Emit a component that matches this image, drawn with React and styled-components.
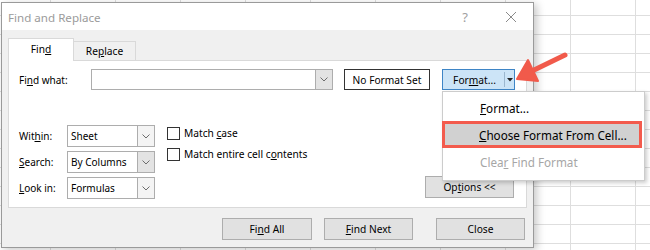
import styled, { createGlobalStyle } from 'styled-components';

const GlobalStyle = createGlobalStyle`
  html, body {
    margin: 0;
    padding: 0;
  }
  body {
    font-family: 'Noto Sans', 'Open Sans', sans-serif;
    color: #000;
  }
`;

const UI_FONT = "'Noto Sans', 'Open Sans', sans-serif";

const Sheet = styled.div`
  position: relative;
  width: 650px;
  height: 250px;
  overflow: hidden;
  background-color: #fff;
  background-image: linear-gradient(to right, #dedede 1px, transparent 1px),
    linear-gradient(to bottom, #dedede 1px, transparent 1px);
  background-size: 65px 100%, 100% 19px;
  background-position: 50px 0, 0 15px;
  padding-top: 2px;
  padding-left: 1px;
  box-sizing: border-box;
`;

const Dialog = styled.div`
  width: 533px;
  height: 246px;
  box-sizing: border-box;
  border: 1px solid #9a9a9a;
  background: #f0f0f0;
  box-shadow: 3px 2px 8px rgba(0, 0, 0, 0.22);
  display: flex;
  flex-direction: column;
  font-family: ${UI_FONT};
  font-size: 10px;
`;

const TitleBar = styled.div`
  height: 27px;
  background: #fff;
  display: flex;
  align-items: center;
  padding: 0 6px;
  flex-shrink: 0;
`;

const Title = styled.div`
  flex: 1;
  color: #9b9b9b;
  font-size: 11.6px;
  padding-top: 1px;
`;

const TitleIcon = styled.div`
  color: #a0a0a0;
  font-size: 13px;
  width: 12px;
  display: flex;
  justify-content: center;
  margin-right: ${(p) => p.$gap}px;
`;

const Body = styled.div`
  flex: 1;
  padding: 8px 6px 0;
  display: flex;
  flex-direction: column;
`;

const Tabs = styled.div`
  display: flex;
  align-items: flex-end;
  height: 22px;
`;

const Tab = styled.div`
  position: relative;
  z-index: ${(p) => (p.$active ? 2 : 1)};
  width: ${(p) => p.$width}px;
  height: ${(p) => (p.$active ? 23 : 20)}px;
  margin-bottom: -1px;
  box-sizing: border-box;
  border: 1px solid #d9d9d9;
  border-bottom: ${(p) => (p.$active ? 'none' : '1px solid #d9d9d9')};
  border-left: ${(p) => (p.$active ? '1px solid #d9d9d9' : 'none')};
  background: ${(p) => (p.$active ? '#fff' : '#f0f0f0')};
  display: flex;
  align-items: center;
  justify-content: center;
  padding-bottom: ${(p) => (p.$active ? 2 : 0)}px;
  font-size: 10.2px;
`;

const Panel = styled.div`
  position: relative;
  z-index: 1;
  height: 148px;
  box-sizing: border-box;
  border: 1px solid #d9d9d9;
  background: #fff;
  padding: 8px 11px 9px 10px;
  display: flex;
  flex-direction: column;
`;

const Row = styled.div`
  display: flex;
  align-items: center;
  height: 21px;
`;

const Label = styled.div`
  width: ${(p) => p.$width}px;
  flex-shrink: 0;
`;

const Combo = styled.div`
  width: ${(p) => p.$width}px;
  height: ${(p) => p.$height}px;
  box-sizing: border-box;
  border: 1px solid #adadad;
  background: #fff;
  display: flex;
  align-items: stretch;
  flex-shrink: 0;
`;

const ComboValue = styled.div`
  flex: 1;
  display: flex;
  align-items: center;
  padding-left: 3px;
`;

const ComboButton = styled.div`
  width: 16px;
  border-left: 1px solid #adadad;
  background: ${(p) => (p.$shade ? '#e3e3e3' : '#f4f4f4')};
  display: flex;
  align-items: center;
  justify-content: center;
`;

const FormatBox = styled.div`
  margin-left: 11px;
  width: 86px;
  height: 21px;
  box-sizing: border-box;
  border: 1px solid #333;
  display: flex;
  align-items: center;
  justify-content: center;
  font-size: 10.2px;
`;

const SplitButton = styled.div`
  margin-left: 12px;
  width: 73px;
  height: 21px;
  box-sizing: border-box;
  border: 1px solid #3e85c6;
  background: #cce4f7;
  display: flex;
  align-items: center;
  font-size: 10.2px;
`;

const SplitMain = styled.div`
  flex: 1;
  text-align: center;
  padding-left: 2px;
`;

const SplitDivider = styled.div`
  width: 1px;
  height: 15px;
  background: #9bb7cf;
`;

const SplitArrow = styled.div`
  width: 9px;
  display: flex;
  justify-content: center;
`;

const OptionsArea = styled.div`
  margin-top: 35px;
  display: flex;
  align-items: flex-end;
`;

const Fields = styled.div`
  display: flex;
  flex-direction: column;
  gap: 4px;
`;

const Field = styled.div`
  display: flex;
  align-items: center;
`;

const Checks = styled.div`
  margin-left: 12px;
  align-self: flex-start;
  display: flex;
  flex-direction: column;
  gap: 7px;
  padding-top: 1px;
  flex: 1;
`;

const Check = styled.div`
  display: flex;
  align-items: center;
  gap: 4px;
  font-size: 10.2px;
`;

const Box = styled.div`
  width: 13px;
  height: 13px;
  box-sizing: border-box;
  border: 1px solid #333;
  background: #fff;
`;

const Button = styled.div`
  width: ${(p) => p.$width}px;
  height: 22px;
  margin-left: ${(p) => p.$gap || 0}px;
  box-sizing: border-box;
  border: 1px solid #adadad;
  background: #e1e1e1;
  display: flex;
  align-items: center;
  justify-content: center;
  font-size: 10.2px;
`;

const OptionsButton = styled(Button)`
  margin-bottom: 1px;
  margin-right: 1px;
`;

const Footer = styled.div`
  margin-top: 10px;
  padding-right: 2px;
  display: flex;
  justify-content: flex-end;
`;

const Menu = styled.div`
  position: absolute;
  left: 442px;
  top: 91px;
  width: 203px;
  height: 90px;
  box-sizing: border-box;
  border: 1px solid #cccccc;
  background: #fff;
  box-shadow: 2px 2px 4px rgba(0, 0, 0, 0.2);
  padding-top: 2px;
  font-family: ${UI_FONT};
  font-size: 11.7px;
  z-index: 5;
`;

const MenuItem = styled.div`
  height: 27px;
  box-sizing: border-box;
  display: flex;
  align-items: center;
  padding-left: ${(p) => (p.$hot ? 34 : 37)}px;
  margin-right: ${(p) => (p.$hot ? 2 : 0)}px;
  margin-left: ${(p) => (p.$hot ? -1 : 0)}px;
  color: ${(p) => (p.$disabled ? '#a6a6a6' : '#000')};
  background: ${(p) => (p.$hot ? '#d1d1d1' : 'transparent')};
  border: ${(p) => (p.$hot ? '3px solid #f35b4d' : 'none')};
`;

const Pointer = styled.svg`
  position: absolute;
  left: 510px;
  top: 44px;
  z-index: 6;
`;

const Chevron = () => (
  <svg width="8" height="5" viewBox="0 0 8 5">
    <path d="M0.5 0.5 L4 4 L7.5 0.5" fill="none" stroke="#6d6d6d" strokeWidth="1" />
  </svg>
);

const Combobox = ({ width, height = 22, value, shade }) => (
  <Combo $width={width} $height={height}>
    <ComboValue>{value}</ComboValue>
    <ComboButton $shade={shade}>
      <Chevron />
    </ComboButton>
  </Combo>
);

const App = () => (
  <>
    <GlobalStyle />
    <Sheet>
      <Dialog>
        <TitleBar>
          <Title>Find and Replace</Title>
          <TitleIcon $gap={34}>?</TitleIcon>
          <TitleIcon $gap={10}>
            <svg width="12" height="12" viewBox="0 0 12 12">
              <path d="M1 1 L11 11 M11 1 L1 11" stroke="#8a8a8a" strokeWidth="1" />
            </svg>
          </TitleIcon>
        </TitleBar>
        <Body>
          <Tabs>
            <Tab $active $width={66}>
              Fin<u>d</u>
            </Tab>
            <Tab $width={62}>
              Re<u>p</u>lace
            </Tab>
          </Tabs>
          <Panel>
            <Row>
              <Label $width={72}>
                Fi<u>n</u>d what:
              </Label>
              <Combobox width={242} height={21} shade />
              <FormatBox>No Format Set</FormatBox>
              <SplitButton>
                <SplitMain>
                  For<u>m</u>at...
                </SplitMain>
                <SplitDivider />
                <SplitArrow>
                  <svg width="6" height="4" viewBox="0 0 6 4">
                    <path d="M0 0 L6 0 L3 3.5 Z" fill="#222" />
                  </svg>
                </SplitArrow>
              </SplitButton>
            </Row>
            <OptionsArea>
              <Fields>
                <Field>
                  <Label $width={48}>
                    Wit<u>h</u>in:
                  </Label>
                  <Combobox width={88} value="Sheet" />
                </Field>
                <Field>
                  <Label $width={48}>
                    <u>S</u>earch:
                  </Label>
                  <Combobox width={88} value="By Columns" shade />
                </Field>
                <Field>
                  <Label $width={48}>
                    <u>L</u>ook in:
                  </Label>
                  <Combobox width={88} value="Formulas" />
                </Field>
              </Fields>
              <Checks>
                <Check>
                  <Box />
                  <span>
                    Match <u>c</u>ase
                  </span>
                </Check>
                <Check>
                  <Box />
                  <span>
                    Match entire cell c<u>o</u>ntents
                  </span>
                </Check>
              </Checks>
              <OptionsButton $width={89}>
                Op<u>t</u>ions &lt;&lt;
              </OptionsButton>
            </OptionsArea>
          </Panel>
          <Footer>
            <Button $width={90}>
              Fi<u>n</u>d All
            </Button>
            <Button $width={89} $gap={12}>
              <u>F</u>ind Next
            </Button>
            <Button $width={89} $gap={23}>
              Close
            </Button>
          </Footer>
        </Body>
      </Dialog>

      <Menu>
        <MenuItem>
          <span>
            <u>F</u>ormat...
          </span>
        </MenuItem>
        <MenuItem $hot>
          <span>
            <u>C</u>hoose Format From Cell...
          </span>
        </MenuItem>
        <MenuItem $disabled>
          <span>
            Clea<u>r</u> Find Format
          </span>
        </MenuItem>
      </Menu>

      <Pointer width="80" height="45" viewBox="0 0 80 45">
        <path d="M55 11 L22 27" stroke="#f15a4b" strokeWidth="5" strokeLinecap="round" />
        <path d="M7 35 L18 16 L28 37 Z" fill="#f15a4b" stroke="#f15a4b" strokeWidth="2" strokeLinejoin="round" />
      </Pointer>
    </Sheet>
  </>
);

export default App;
